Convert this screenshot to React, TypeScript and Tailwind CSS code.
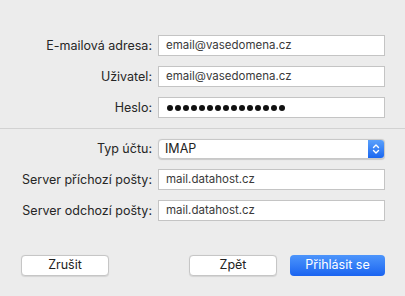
import React from "react";

const font = { fontFamily: "Inter, 'Liberation Sans', sans-serif" };

function Field({ label, value, pw }: { label: string; value: string; pw?: boolean }) {
  return (
    <>
      <div className="whitespace-nowrap text-right text-[12.5px] text-[#262626] leading-[21px]">{label}</div>
      <div className="h-[21px] border border-[#c4c4c4] bg-white px-[7px] flex items-center text-[11.5px] text-[#3a3a3a]">
        {pw ? (
          <div className="flex gap-[2px] pl-[1px]">
            {Array.from({ length: 15 }).map((_, i) => (
              <span key={i} className="w-[6px] h-[6px] rounded-full bg-[#111]" />
            ))}
          </div>
        ) : (
          value
        )}
      </div>
    </>
  );
}

export default function App() {
  return (
    <div className="w-[405px] h-[296px] bg-[#ececec] flex flex-col" style={font}>
      <div className="pt-[35px] px-[20px] grid grid-cols-[132px_227px] gap-x-[6px] gap-y-[10px]">
        <Field label="E-mailová adresa:" value="email@vasedomena.cz" />
        <Field label="Uživatel:" value="email@vasedomena.cz" />
        <Field label="Heslo:" value="" pw />
      </div>
      <div className="mt-[10px] h-px bg-[#d2d2d2]" />
      <div className="pt-[10px] px-[20px] grid grid-cols-[132px_227px] gap-x-[6px] gap-y-[10px]">
        <div className="whitespace-nowrap text-right text-[12.5px] text-[#262626] leading-[20px]">Typ účtu:</div>
        <div className="h-[20px] rounded-[4px] bg-white border border-[#c8c8c8] flex items-center shadow-[0_0.5px_1px_rgba(0,0,0,0.15)]">
          <span className="pl-[6px] flex-1 text-[12.5px] text-[#222]">IMAP</span>
          <div className="w-[16px] h-[18px] rounded-r-[3px] bg-gradient-to-b from-[#5aa0fb] to-[#1a66f0] flex items-center justify-center">
            <svg width="8" height="12" viewBox="0 0 8 12" fill="none" stroke="white" strokeWidth="1.4" strokeLinecap="round" strokeLinejoin="round">
              <path d="M1.5 4.5 L4 2 L6.5 4.5" />
              <path d="M1.5 7.5 L4 10 L6.5 7.5" />
            </svg>
          </div>
        </div>
        <Field label="Server příchozí pošty:" value="mail.datahost.cz" />
        <Field label="Server odchozí pošty:" value="mail.datahost.cz" />
      </div>
      <div className="mt-[34px] px-[20px] flex items-center">
        <button className="ml-[1px] w-[88px] h-[21px] rounded-[4px] bg-white border border-[#c6c6c6] text-[12.5px] text-[#222] shadow-[0_0.5px_1px_rgba(0,0,0,0.1)]">Zrušit</button>
        <div className="flex-1" />
        <button className="w-[88px] h-[21px] rounded-[4px] bg-white border border-[#c6c6c6] text-[12.5px] text-[#222] shadow-[0_0.5px_1px_rgba(0,0,0,0.1)]">Zpět</button>
        <button className="ml-[13px] w-[95px] h-[21px] rounded-[4px] bg-gradient-to-b from-[#4d95fb] to-[#1a63f0] text-[12.5px] text-white">Přihlásit se</button>
      </div>
    </div>
  );
}
